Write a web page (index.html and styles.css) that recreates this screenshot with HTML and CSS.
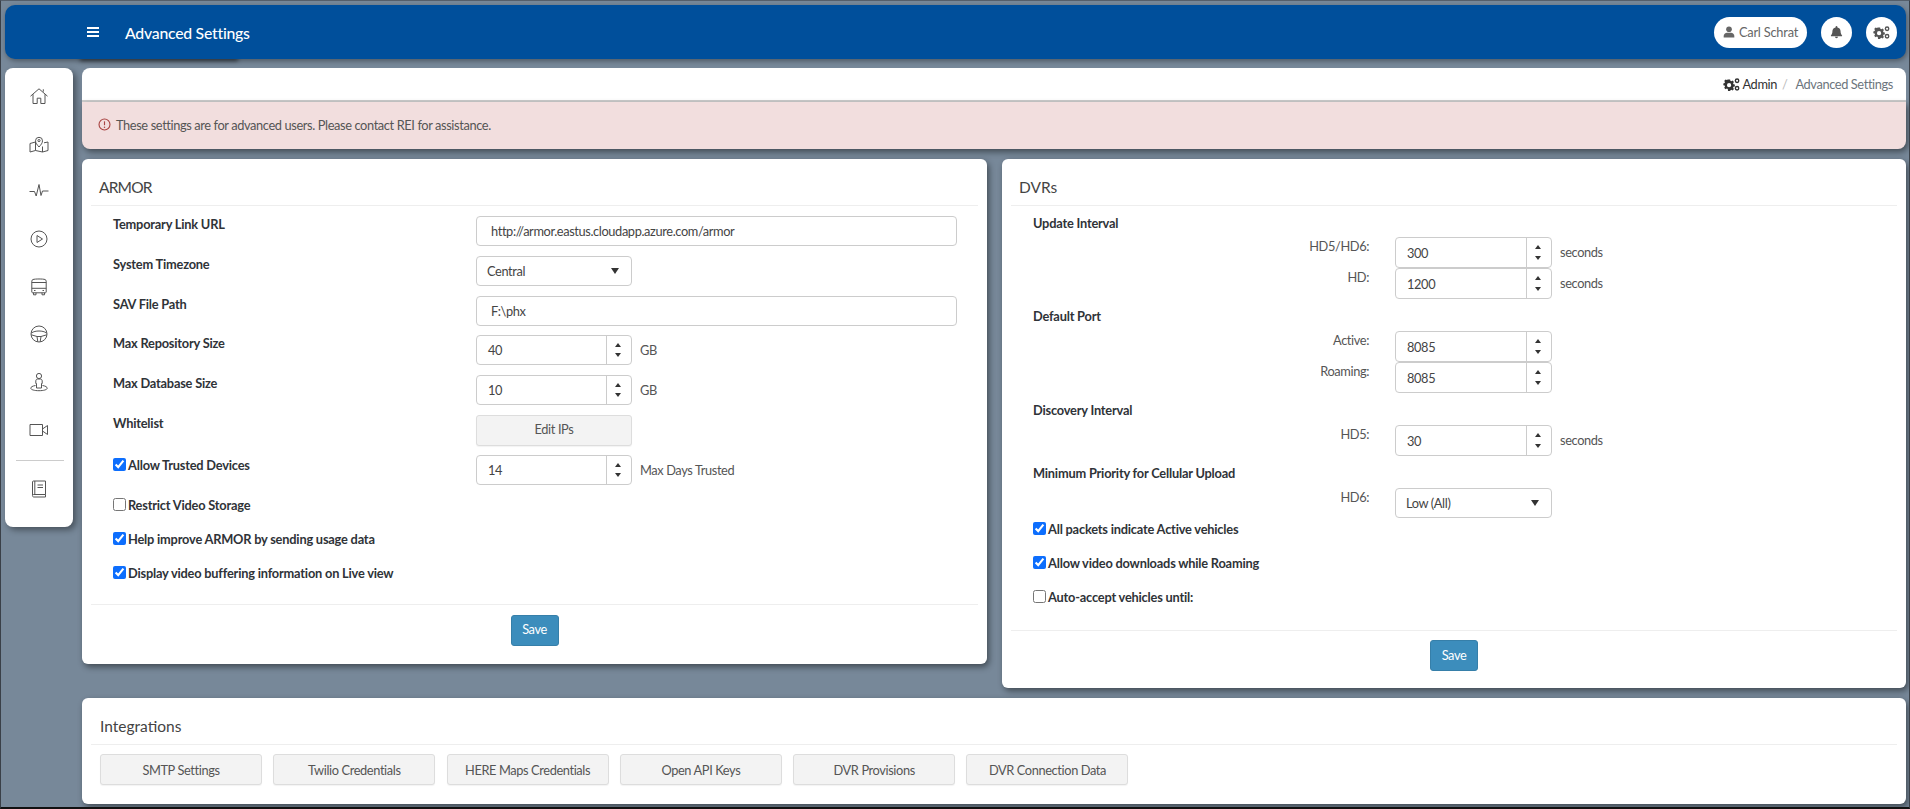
FILE: index.html
```html
<!DOCTYPE html>
<html lang="en">
<head>
<meta charset="utf-8">
<title>Advanced Settings</title>
<link rel="stylesheet" href="styles.css">
</head>
<body>
<div class="frame">
  <header class="topbar">
    <span class="burger"><i></i><i></i><i></i></span>
    <h1 class="page-title">Advanced Settings</h1>
    <div class="top-actions">
      <button class="pill">
        <svg class="pill-icon" viewBox="0 0 14 14"><circle cx="7" cy="3.8" r="3.3"/><path d="M0.8 13.4v-1.6c0-2.4 1.8-3.9 3.9-3.9h4.6c2.1 0 3.9 1.5 3.9 3.9v1.6z"/></svg>
        Carl Schrat
      </button>
      <button class="round">
        <svg class="bell" viewBox="0 0 14 14"><path d="M7 .6c.6 0 1 .4 1 1v.5c2.2.4 3.4 2 3.4 4.2 0 2.6.8 3.4 1.6 4.4.2.4 0 .9-.5.9H1.500c-.5 0-.7-.5-.5-.9.8-1 1.600-1.800 1.600-4.400 0-2.200 1.200-3.800 3.400-4.200v-.5c0-.6.4-1 1-1zM5.400 12.200h3.200c0 .9-.7 1.400-1.600 1.400s-1.600-.5-1.600-1.400z"/></svg>
      </button>
      <button class="round">
        <svg class="gears" viewBox="0 0 18 14"><use href="#gears"/></svg>
      </button>
    </div>
  </header>
  <div class="workspace">
    <nav class="sidenav">
      <svg class="nav-icon" viewBox="0 0 20 20"><path d="M1.500 10.200 10 2.800l8.500 7.400M4 8.200V17.500h4.200v-5.300h3.600v5.300H16V8.200M14.300 5.700V3.300"/></svg>
      <svg class="nav-icon" viewBox="0 0 20 20"><path d="M6.500 8 1 9.500v8.500l5.500-1.500 7 1.500 5.500-1.500V8l-4 .8M6.500 8v8.500M13.500 12.500V18"/><path d="M10 13c-2-2.300-3.500-4-3.500-6.200a3.500 3.500 0 0 1 7 0c0 2.200-1.500 3.900-3.500 6.200z"/><circle cx="10" cy="6.600" r="1.100"/></svg>
      <svg class="nav-icon" viewBox="0 0 20 20"><path d="M.5 10.500h5l1.700 4.500L10 3.500l2 11 1.500-4.500h6"/></svg>
      <svg class="nav-icon" viewBox="0 0 20 20"><circle cx="10" cy="10" r="8"/><path d="M8 6.500v7l5.500-3.500z"/></svg>
      <svg class="nav-icon" viewBox="0 0 20 20"><path d="M4 2.500C6 1.800 14 1.800 16 2.500c.8.300 1.200.9 1.200 1.700v10.800c0 .5-.4.800-.8.800H3.600c-.4 0-.8-.3-.8-.8V4.200c0-.8.400-1.400 1.200-1.700zM2.800 5.500h14.400M2.800 11.300h14.400M4.500 15.800v2h2.500v-2M13 15.800v2h2.500v-2M5 13.500h1.500M13.500 13.500H15"/></svg>
      <svg class="nav-icon" viewBox="0 0 20 20"><circle cx="10" cy="10" r="8"/><path d="M2.300 9c2.500-1.500 4.700-2 7.700-2s5.200.5 7.700 2M8.800 17.800 8 12.500 2.300 10.800M11.200 17.800l.8-5.300 5.700-1.700M8 12.500h4"/></svg>
      <svg class="nav-icon" viewBox="0 0 20 20"><circle cx="10" cy="4" r="2.600"/><path d="M7.500 16v-4.500H6.800V9c0-1.200.8-2 1.800-2h2.800c1 0 1.800.8 1.800 2v2.500h-.7V16z"/><path d="M6.500 13.500C3.500 14 1.800 15 1.800 16.200c0 1.500 3.600 2.500 8.200 2.500s8.200-1 8.200-2.500c0-1.200-1.700-2.200-4.700-2.700"/></svg>
      <svg class="nav-icon" viewBox="0 0 20 20"><path d="M1 4.500h12.500v11H1zM13.500 9l5-3.500v9l-5-3.500"/></svg>
      <hr class="nav-sep">
      <svg class="nav-icon" viewBox="0 0 20 20"><path d="M3.500 16V3c0-.7.400-1 1-1H16.500v13.500H5c-.9 0-1.500.5-1.500 1.300S4.100 18 5 18h11.500v-2.500M5.800 2v13.500M8.500 6h5.500M8.500 8.500h5.500"/></svg>
    </nav>
    <main class="content">
      <div class="crumbs">
        <svg class="crumb-gears" viewBox="0 0 18 14"><use href="#gears"/></svg>
        <a class="crumb-link">Admin</a>
        <span class="crumb-sep">/</span>
        <span class="crumb-current">Advanced Settings</span>
      </div>
      <div class="alert">
        <svg class="alert-icon" viewBox="0 0 14 14"><circle cx="7" cy="7" r="5.900"/><path d="M7 3.600v4.200"/><circle class="dot" cx="7" cy="10" r=".8"/></svg>
        <span>These settings are for advanced users. Please contact REI for assistance.</span>
      </div>
      <div class="columns">
        <section class="card armor">
          <h2 class="card-title">ARMOR</h2>
          <div class="form-grid">
            <label class="label">Temporary Link URL</label>
            <input class="input wide" type="text" value="http://armor.eastus.cloudapp.azure.com/armor">
            <label class="label">System Timezone</label>
            <div class="select">Central</div>
            <label class="label">SAV File Path</label>
            <input class="input wide" type="text" value="F:\phx">
            <label class="label">Max Repository Size</label>
            <div class="with-unit"><div class="spin"><span>40</span><b></b></div><span class="unit">GB</span></div>
            <label class="label">Max Database Size</label>
            <div class="with-unit"><div class="spin"><span>10</span><b></b></div><span class="unit">GB</span></div>
            <label class="label">Whitelist</label>
            <button class="btn fixed">Edit IPs</button>
            <label class="label check-label mid"><input type="checkbox" checked>Allow Trusted Devices</label>
            <div class="with-unit"><div class="spin"><span>14</span><b></b></div><span class="unit">Max Days Trusted</span></div>
          </div>
          <div class="checks">
            <label class="label check-label"><input type="checkbox">Restrict Video Storage</label>
            <label class="label check-label"><input type="checkbox" checked>Help improve ARMOR by sending usage data</label>
            <label class="label check-label"><input type="checkbox" checked>Display video buffering information on Live view</label>
          </div>
          <div class="card-foot"><button class="save">Save</button></div>
        </section>
        <section class="card dvrs">
          <h2 class="card-title">DVRs</h2>
          <div class="dvr-body">
            <h3 class="label group first">Update Interval</h3>
            <div class="sub"><span class="sub-label">HD5/HD6:</span><div class="spin"><span>300</span><b></b></div><span class="unit">seconds</span></div>
            <div class="sub"><span class="sub-label">HD:</span><div class="spin"><span>1200</span><b></b></div><span class="unit">seconds</span></div>
            <h3 class="label group">Default Port</h3>
            <div class="sub"><span class="sub-label">Active:</span><div class="spin"><span>8085</span><b></b></div></div>
            <div class="sub"><span class="sub-label">Roaming:</span><div class="spin"><span>8085</span><b></b></div></div>
            <h3 class="label group">Discovery Interval</h3>
            <div class="sub"><span class="sub-label">HD5:</span><div class="spin"><span>30</span><b></b></div><span class="unit">seconds</span></div>
            <h3 class="label group">Minimum Priority for Cellular Upload</h3>
            <div class="sub"><span class="sub-label">HD6:</span><div class="select">Low (All)</div></div>
            <div class="checks dvr-checks">
              <label class="label check-label"><input type="checkbox" checked>All packets indicate Active vehicles</label>
              <label class="label check-label"><input type="checkbox" checked>Allow video downloads while Roaming</label>
              <label class="label check-label"><input type="checkbox">Auto-accept vehicles until:</label>
            </div>
          </div>
          <div class="card-foot"><button class="save">Save</button></div>
        </section>
      </div>
      <section class="card integrations">
        <h2 class="card-title">Integrations</h2>
        <div class="int-buttons">
          <button class="btn">SMTP Settings</button>
          <button class="btn">Twilio Credentials</button>
          <button class="btn">HERE Maps Credentials</button>
          <button class="btn">Open API Keys</button>
          <button class="btn">DVR Provisions</button>
          <button class="btn">DVR Connection Data</button>
        </div>
      </section>
    </main>
  </div>
</div>
<svg class="defs" width="0" height="0">
  <symbol id="gears" viewBox="0 0 18 14">
    <path fill-rule="evenodd" d="M5.300 1.500h2.200l.3 1.500 1 .5 1.400-.7 1.400 1.600-.9 1.300.4 1.100 1.500.3v2.100l-1.500.3-.4 1.100.9 1.300-1.400 1.500-1.400-.8-1 .5-.3 1.500H5.300L5 11.800l-1-.5-1.400.8-1.500-1.500.9-1.300-.4-1.100-1.500-.3V5.800l1.500-.3.400-1.100-.9-1.300 1.500-1.600 1.400.7 1-.5zM6.400 5.400a2.300 2.300 0 1 0 0 4.600 2.300 2.300 0 0 0 0-4.600z"/>
    <path fill-rule="evenodd" d="M15 .4a2.600 2.600 0 1 1 0 5.200 2.600 2.600 0 0 1 0-5.200zm0 1.500a1.100 1.100 0 1 0 0 2.200 1.100 1.100 0 0 0 0-2.200zM15 8.400a2.600 2.600 0 1 1 0 5.200 2.600 2.600 0 0 1 0-5.200zm0 1.500a1.100 1.100 0 1 0 0 2.200 1.100 1.100 0 0 0 0-2.200z"/>
  </symbol>
</svg>
</body>
</html>
```
FILE: styles.css
```css
* { box-sizing: border-box; }
html, body { margin: 0; height: 100%; }
body {
  background: #778899;
  font-family: "Lato", "Noto Sans", sans-serif;
  font-size: 12.800px;
  letter-spacing: -.38px;
  color: #333;
  overflow: hidden;
}
button, input { font: inherit; letter-spacing: inherit; }
.defs { position: absolute; }
.frame {
  width: 1910px;
  height: 809px;
  padding: 4px 3px 0 4px;
  border-top: 1px solid #555f6b;
  border-left: 1px solid #3a4048;
  border-right: 1px solid #3a4048;
  border-bottom: 2px solid #111;
  overflow: hidden;
}
.topbar {
  position: relative;
  height: 54px;
  width: 1901px;
  background: #004f9b;
  border-radius: 10px;
  display: flex;
  align-items: center;
  padding-left: 82px;
  box-shadow: 1px 2px 5px rgba(0, 0, 0, .35);
}
.topbar::after {
  content: "";
  position: absolute;
  left: 76px;
  bottom: 1px;
  width: 156px;
  height: 2px;
  box-shadow: 0 2px 4px 1px rgba(0, 0, 0, .6);
  z-index: -1;
}
.burger { width: 12px; display: flex; flex-direction: column; gap: 2px; }
.burger i { display: block; height: 2px; background: #fff; }
.page-title {
  margin: 0 0 0 26px;
  font-size: 15.800px;
  letter-spacing: -.25px;
  font-weight: 500;
  color: #fff;
}
.top-actions { margin-left: auto; display: flex; align-items: center; padding-right: 9px; gap: 14px; }
.pill, .round {
  height: 31px;
  background: #fff;
  border: 0;
  border-radius: 16px;
  color: #666;
  display: flex;
  align-items: center;
  justify-content: center;
  padding: 0;
}
.pill { width: 93px; gap: 4px; letter-spacing: -.2px; }
.round { width: 31px; }
.pill-icon { width: 12px; height: 12px; fill: #666; }
.bell { width: 13px; height: 14px; fill: #555; }
.gears { width: 17px; height: 13px; fill: #555; }

.workspace { display: flex; margin-top: 9px; gap: 9px; align-items: flex-start; }
.sidenav {
  width: 68px;
  height: 459px;
  background: #fff;
  border-radius: 8px;
  box-shadow: 3px 3px 6px rgba(0, 0, 0, .4);
  display: flex;
  flex-direction: column;
  align-items: center;
  padding-top: 18px;
  gap: 27.700px;
}
.nav-icon { width: 20px; height: 20px; fill: none; stroke: #555; stroke-width: 1; }
.nav-sep { width: 48px; margin: -8px 0 -9px 1px; border: 0; border-top: 1px solid #ccc; }

.content { width: 1824px; }
.crumbs {
  height: 34px;
  background: #fff;
  border-bottom: 2px solid #ccc;
  border-radius: 8px 8px 0 0;
  display: flex;
  justify-content: flex-end;
  align-items: center;
  padding-right: 13px;
}
.crumb-gears { width: 17px; height: 13px; fill: #333; margin-right: 2px; }
.crumb-link { color: #333; }
.crumb-sep { color: #bbb; margin: 0 8px 0 5px; }
.crumb-current { color: #6c757d; }
.alert {
  height: 47px;
  background: #f2dede;
  border-radius: 0 0 8px 8px;
  display: flex;
  align-items: center;
  padding: 0 0 2px 16px;
  gap: 5px;
  color: #555;
  box-shadow: 2px 3px 6px rgba(0, 0, 0, .45);
}
.alert-icon { width: 13px; height: 13px; fill: none; stroke: #a94442; stroke-width: 1.200; }
.alert-icon .dot { fill: #a94442; stroke: none; }

.columns { display: flex; gap: 15px; margin-top: 10px; align-items: flex-start; }
.card {
  background: #fff;
  border-radius: 6px;
  box-shadow: 2px 3px 6px rgba(0, 0, 0, .45);
}
.armor { width: 905px; height: 505px; }
.dvrs { width: 904px; height: 529px; }
.card-title {
  margin: 0 9px;
  height: 47px;
  padding: 17px 8px 0;
  font-size: 15.500px;
  line-height: 22px;
  letter-spacing: 0;
  font-weight: 400;
  color: #444;
  border-bottom: 1px solid #eee;
}
.armor .card-title { letter-spacing: -.8px; }
.form-grid {
  display: grid;
  grid-template-columns: 363px 481px;
  grid-auto-rows: 30px;
  row-gap: 9.800px;
  padding: 10px 0 0 31px;
}
.label { font-size: 12.800px; letter-spacing: -.2px; font-weight: 700; color: #2f3338; line-height: 17px; margin: 0; }
.check-label { display: flex; align-items: flex-start; }
.check-label input { margin: 1px 2px 0 0; width: 13px; height: 13px; accent-color: #0d6efd; flex: none; }
.mid { padding-top: 2px; }
.input, .spin, .select {
  height: 30px;
  border: 1px solid #ccc;
  border-radius: 4px;
  background: #fff;
  color: #444;
}
.input { padding: 0 14px; outline: 0; }
.wide { width: 481px; }
.select {
  position: relative;
  width: 156px;
  display: flex;
  align-items: center;
  padding-left: 10px;
}
.select::after {
  content: "";
  position: absolute;
  right: 12px;
  top: 11px;
  border: 4px solid transparent;
  border-top: 6px solid #333;
  border-bottom: 0;
}
.with-unit { display: flex; align-items: center; }
.spin {
  position: relative;
  width: 156px;
  display: flex;
  align-items: center;
  padding-left: 11px;
}
.spin b {
  position: absolute;
  right: 0;
  top: 0;
  bottom: 0;
  width: 25px;
  border-left: 1px solid #ccc;
}
.spin b::before, .spin b::after {
  content: "";
  position: absolute;
  left: 8px;
  border: 3.500px solid transparent;
}
.spin b::before { top: 7px; border-bottom: 4.500px solid #333; border-top: 0; }
.spin b::after { bottom: 7px; border-top: 4.500px solid #333; border-bottom: 0; }
.unit { margin-left: 8px; color: #555; }
.btn {
  height: 31px;
  background: #f3f3f3;
  border: 1px solid #ddd;
  border-radius: 3px;
  color: #555;
  padding: 0 0 2px;
  box-shadow: 0 1px 1px rgba(0, 0, 0, .05);
}
.int-buttons .btn { padding: 0; }
.fixed { width: 156px; }
.checks { padding: 0 0 0 31px; }
.checks .check-label { height: 34px; padding-top: 9px; }
.card-foot {
  margin: 0 9px;
  border-top: 1px solid #eee;
  display: flex;
  justify-content: center;
  padding-top: 9.500px;
}
.armor .checks { margin-top: 3.500px; }
.armor .card-foot { margin-top: 14px; }
.save {
  width: 48px;
  height: 31px;
  background: #3c8dbc;
  border: 1px solid #367fa9;
  border-radius: 3px;
  color: #fff;
  padding: 0 0 2px;
}
.dvr-body { padding: 9px 0 0 31px; }
.group { margin-top: 9px; height: 18px; }
.group.first { margin-top: 0; }
.sub { display: flex; align-items: flex-start; height: 31px; }
.sub .spin { height: 31px; width: 157px; padding-top: 1px; }
.sub .select { width: 157px; }
.group + .sub { margin-top: 5px; }
.first + .sub { margin-top: 4px; }
.sub-label { width: 336px; text-align: right; color: #555; line-height: 18px; margin-right: 26px; }
.sub .unit { margin-top: 7px; }
.dvr-checks { padding-left: 0; margin-top: -7.500px; }
.dvrs .card-foot { margin-top: 16px; }

.integrations { height: 106px; margin-top: 10px; width: 1824px; }
.integrations .card-title { padding-left: 9px; }
.int-buttons { display: flex; gap: 11.300px; padding: 9px 18px; }
.int-buttons .btn { width: 162px; }
```
